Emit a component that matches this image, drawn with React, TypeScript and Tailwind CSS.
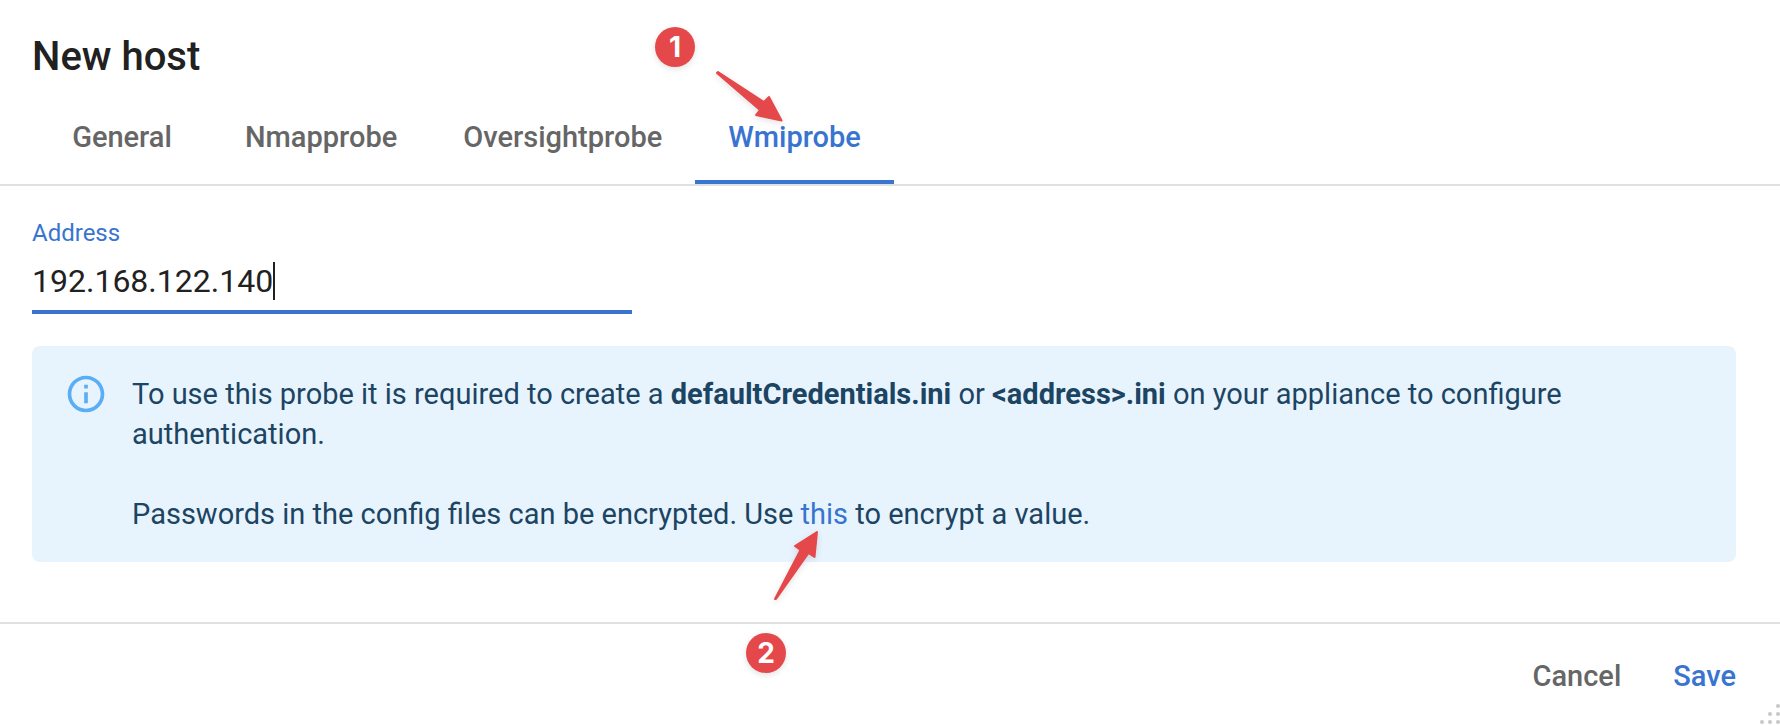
import React, { useState } from "react";

const tabs = ["General", "Nmapprobe", "Oversightprobe", "Wmiprobe"];

function InfoIcon() {
  return (
    <svg className="size-11 fill-[#5aaef4]" viewBox="0 0 24 24" aria-hidden="true">
      <path d="M11 7h2v2h-2zm0 4h2v6h-2zm1-9C6.48 2 2 6.48 2 12s4.48 10 10 10 10-4.48 10-10S17.52 2 12 2zm0 18c-4.41 0-8-3.59-8-8s3.59-8 8-8 8 3.59 8 8-3.59 8-8 8z" />
    </svg>
  );
}

function Badge({ label, className }: { label: string; className: string }) {
  return (
    <span
      className={`absolute flex size-10 items-center justify-center rounded-full bg-[#e5484b] font-['Inter',sans-serif] text-[28px] leading-none font-bold text-white shadow-[0_2px_6px_rgba(0,0,0,0.12)] ${className}`}
    >
      {label}
    </span>
  );
}

function Arrow({ d, className }: { d: string; className: string }) {
  return (
    <svg
      className={`pointer-events-none absolute overflow-visible fill-[#e5484b] stroke-[#e5484b] drop-shadow-[0_2px_3px_rgba(0,0,0,0.12)] ${className}`}
      strokeWidth="2"
      strokeLinejoin="round"
      aria-hidden="true"
    >
      <path d={d} />
    </svg>
  );
}

export default function App() {
  const [active, setActive] = useState("Wmiprobe");
  const [address, setAddress] = useState("192.168.122.140");

  return (
    <div className="relative flex min-h-screen flex-col bg-white font-['Roboto',sans-serif] text-[#212121]">
      <header className="border-b-2 border-[#e0e0e0] pt-6">
        <h1 className="px-8 text-[40px] leading-[66px] font-medium">New host</h1>
        <div role="tablist" className="flex px-8">
          {tabs.map((tab) => (
            <button
              key={tab}
              type="button"
              role="tab"
              aria-selected={active === tab}
              onClick={() => setActive(tab)}
              className={`h-[94px] min-w-[180px] border-b-4 px-[33px] pt-1 text-[29px] leading-10 font-medium ${
                active === tab ? "border-[#3874d0] text-[#3874d0]" : "border-transparent text-[#666666]"
              }`}
            >
              {tab}
            </button>
          ))}
        </div>
      </header>

      <main className="flex-1 pt-8 pr-11 pb-[60px] pl-8">
        <div className="max-w-[600px] border-b-4 border-[#3874d0]">
          <label htmlFor="address" className="block text-2xl leading-[30px] text-[#3874d0]">
            Address
          </label>
          <div className="mt-1 flex h-[58px] items-center">
            <input
              id="address"
              type="text"
              value={address}
              onChange={(e) => setAddress(e.target.value)}
              className="field-sizing-content text-[32px] leading-[38px] caret-transparent outline-none"
            />
            <span className="h-[38px] w-0.5 bg-[#212121]" />
          </div>
        </div>

        <div role="alert" className="mt-8 flex gap-6 rounded-lg bg-[#e8f4fd] px-8 py-3 text-[29px] leading-10 text-[#1c4463]">
          <div className="shrink-0 py-3.5">
            <InfoIcon />
          </div>
          <div className="py-4">
            <p>
              To use this probe it is required to create a <b>defaultCredentials.ini</b> or{" "}
              <b>&lt;address&gt;.ini</b> on your appliance to configure
              <br />
              authentication.
            </p>
            <p className="mt-10">
              Passwords in the config files can be encrypted. Use{" "}
              <a href="#encrypt" className="text-[#3874d0]">
                this
              </a>{" "}
              to encrypt a value.
            </p>
          </div>
        </div>
      </main>

      <footer className="flex justify-end gap-[52px] border-t-2 border-[#e0e0e0] pt-8 pr-11 pb-[30px] text-[29px] leading-10 font-medium">
        <button type="button" className="text-[#666666]">
          Cancel
        </button>
        <button type="button" className="text-[#3874d0]">
          Save
        </button>
      </footer>

      <svg className="absolute right-0 bottom-0 size-6 fill-[#c8c8c8]" viewBox="0 0 24 24" aria-hidden="true">
        <circle cx="22" cy="4" r="2" />
        <circle cx="14" cy="12" r="2" />
        <circle cx="22" cy="12" r="2" />
        <circle cx="6" cy="20" r="2" />
        <circle cx="14" cy="20" r="2" />
        <circle cx="22" cy="20" r="2" />
      </svg>

      <Badge label="1" className="top-[27px] left-[655px]" />
      <Arrow
        className="top-[70px] left-[715px] h-[54px] w-[70px]"
        d="M3 2 49 32 54 27 66.5 50.5 41 45 45 40 2 3Z"
      />
      <Arrow
        className="top-[530px] left-[773px] h-[72px] w-[48px]"
        d="M2 69 27.5 20 22 16 44 2 41.5 27 35.5 23 3 69Z"
      />
      <Badge label="2" className="top-[633px] left-[746px]" />
    </div>
  );
}
